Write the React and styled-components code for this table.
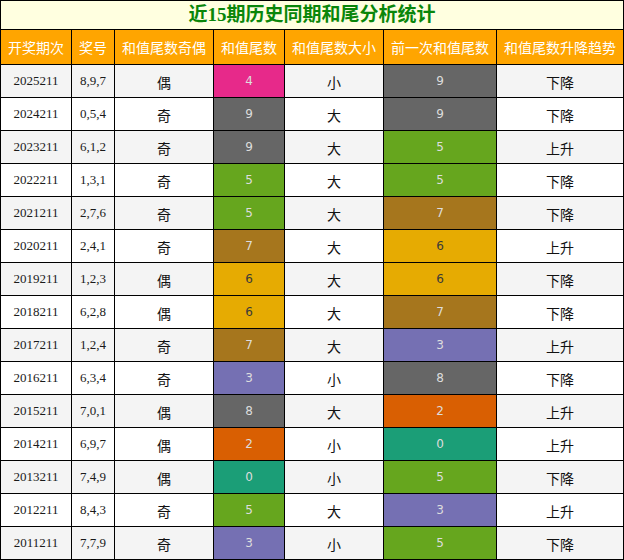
import React from "react";
import styled, { createGlobalStyle } from "styled-components";

const GlobalStyle = createGlobalStyle`
  html, body {
    margin: 0;
    padding: 0;
    background: #ffffff;
  }
`;

const Table = styled.table`
  width: 624px;
  border-collapse: collapse;
  table-layout: fixed;
  font-family: "Liberation Serif", "Noto Sans CJK SC", serif;
  font-size: 13px;
  color: #222;

  td, th {
    border: 1px solid #000;
    padding: 0;
    text-align: center;
  }
`;

const TitleCell = styled.th`
  height: 28px;
  background: #ffffe0;
  color: #0a860a;
  font-family: "Liberation Serif", "Noto Sans CJK SC", serif;
  font-size: 19px;
  font-weight: 700;
  line-height: 28px;
`;

const HeadRow = styled.tr`
  height: 35px;
  background: #ffa500;
`;

const HeadCell = styled.th`
  font-family: "Noto Sans CJK SC", sans-serif;
  font-size: 14px;
  font-weight: 400;
  color: #fff;
`;

const Row = styled.tr`
  height: 33px;
  background: ${p => (p.$odd ? "#f4f4f4" : "#ffffff")};
`;

const NumCell = styled.td`
  font-family: "Liberation Serif", serif;
  font-size: 13px;
  color: #1a1a1a;
`;

const WordCell = styled.td`
  font-family: "Noto Sans CJK SC", sans-serif;
  font-size: 14px;
  color: #111;
  padding-top: 2px !important;
`;

const palette = {
  0: "#1b9e77",
  1: "#1b9e77",
  2: "#d95f02",
  3: "#7570b3",
  4: "#e7298a",
  5: "#66a61e",
  6: "#e6ab02",
  7: "#a6761d",
  8: "#666666",
  9: "#666666",
};

const TailCell = styled.td`
  background: ${p => palette[p.$n]};
  color: ${p => (p.$n === 6 ? "#3a3a3a" : "#dddddd")};
  font-family: "DejaVu Sans", sans-serif;
  font-size: 12px;
`;

const rows = [
  ["2025211", "8,9,7", "偶", 4, "小", 9, "下降"],
  ["2024211", "0,5,4", "奇", 9, "大", 9, "下降"],
  ["2023211", "6,1,2", "奇", 9, "大", 5, "上升"],
  ["2022211", "1,3,1", "奇", 5, "大", 5, "下降"],
  ["2021211", "2,7,6", "奇", 5, "大", 7, "下降"],
  ["2020211", "2,4,1", "奇", 7, "大", 6, "上升"],
  ["2019211", "1,2,3", "偶", 6, "大", 6, "下降"],
  ["2018211", "6,2,8", "偶", 6, "大", 7, "下降"],
  ["2017211", "1,2,4", "奇", 7, "大", 3, "上升"],
  ["2016211", "6,3,4", "奇", 3, "小", 8, "下降"],
  ["2015211", "7,0,1", "偶", 8, "大", 2, "上升"],
  ["2014211", "6,9,7", "偶", 2, "小", 0, "上升"],
  ["2013211", "7,4,9", "偶", 0, "小", 5, "下降"],
  ["2012211", "8,4,3", "奇", 5, "大", 3, "上升"],
  ["2011211", "7,7,9", "奇", 3, "小", 5, "下降"],
];

const headers = ["开奖期次", "奖号", "和值尾数奇偶", "和值尾数", "和值尾数大小", "前一次和值尾数", "和值尾数升降趋势"];
const widths = [71, 43, 99, 71, 99, 113];

export default function App() {
  return (
    <>
      <GlobalStyle />
      <Table>
        <colgroup>
          {widths.map((w, i) => <col key={i} style={{ width: w }} />)}
          <col />
        </colgroup>
        <thead>
          <tr>
            <TitleCell colSpan={7}>近15期历史同期和尾分析统计</TitleCell>
          </tr>
          <HeadRow>
            {headers.map(h => <HeadCell key={h}>{h}</HeadCell>)}
          </HeadRow>
        </thead>
        <tbody>
          {rows.map((r, i) => (
            <Row key={r[0]} $odd={i % 2 === 0}>
              <NumCell>{r[0]}</NumCell>
              <NumCell>{r[1]}</NumCell>
              <WordCell>{r[2]}</WordCell>
              <TailCell $n={r[3]}>{r[3]}</TailCell>
              <WordCell>{r[4]}</WordCell>
              <TailCell $n={r[5]}>{r[5]}</TailCell>
              <WordCell>{r[6]}</WordCell>
            </Row>
          ))}
        </tbody>
      </Table>
    </>
  );
}
